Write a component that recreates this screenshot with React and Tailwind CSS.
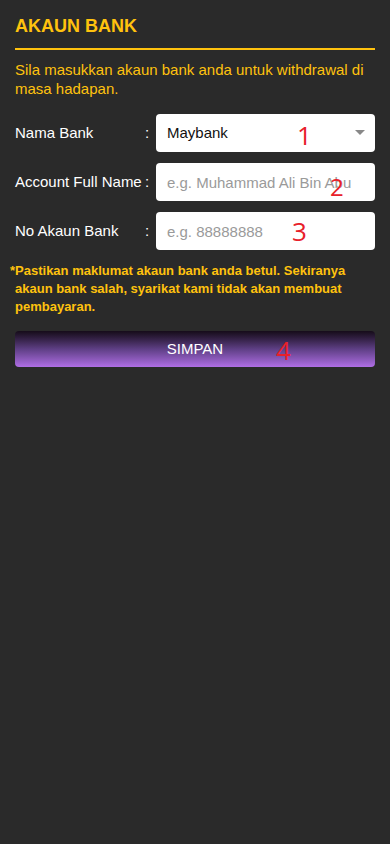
export default function App() {
  const font = { fontFamily: '"Liberation Sans", Arial, sans-serif' }
  const mark = { fontFamily: '"Open Sans", sans-serif' }

  return (
    <div className="min-h-[844px] w-full bg-[#2a2a2a] px-[15px] pt-[15px]" style={font}>
      {/* Title */}
      <h1 className="text-[18px] font-bold leading-[22px] text-[#ffc20e]">AKAUN BANK</h1>
      <div className="mt-[11px] h-[2px] bg-[#ffc20e]" />
      <p className="mt-[10px] text-[15px] leading-[19px] text-[#ffc20e]">
        Sila masukkan akaun bank anda untuk withdrawal di masa hadapan.
      </p>

      {/* Form */}
      <div className="mt-[16px] flex flex-col gap-[11px]">
        <div className="relative flex items-center">
          <label className="w-[130px] text-[15px] text-white">Nama Bank</label>
          <span className="w-[11px] text-[15px] text-white">:</span>
          <div className="relative flex h-[38px] flex-1 items-center rounded-[4px] bg-white pl-[11px] pr-[10px]">
            <span className="flex-1 text-[15px] text-[#111]">Maybank</span>
            <svg width="10" height="6" viewBox="0 0 10 6">
              <path d="M0 0h10L5 5z" fill="#888" />
            </svg>
          </div>
          <span className="absolute left-[282px] top-[3px] text-[26px] leading-[36px] text-[#e8202a]" style={mark}>1</span>
        </div>

        <div className="relative flex items-center">
          <label className="w-[130px] text-[15px] text-white">Account Full Name</label>
          <span className="w-[11px] text-[15px] text-white">:</span>
          <input
            className="h-[38px] min-w-0 flex-1 rounded-[4px] bg-white px-[11px] text-[15px] text-[#111] outline-none placeholder:text-[#9a9a9a]"
            placeholder="e.g. Muhammad Ali Bin Abu"
          />
          <span className="absolute left-[315px] top-[6px] text-[24px] leading-[36px] text-[#e8202a]" style={mark}>2</span>
        </div>

        <div className="relative flex items-center">
          <label className="w-[130px] text-[15px] text-white">No Akaun Bank</label>
          <span className="w-[11px] text-[15px] text-white">:</span>
          <input
            className="h-[38px] min-w-0 flex-1 rounded-[4px] bg-white px-[11px] text-[15px] text-[#111] outline-none placeholder:text-[#9a9a9a]"
            placeholder="e.g. 88888888"
          />
          <span className="absolute left-[277px] top-[1px] text-[26px] leading-[36px] text-[#e8202a]" style={mark}>3</span>
        </div>
      </div>

      {/* Warning */}
      <p className="mt-[12px] text-[13px] font-bold leading-[18px] text-[#ffc20e]">
        <span className="-ml-[5px]">*</span>Pastikan maklumat akaun bank anda betul. Sekiranya akaun bank salah, syarikat kami tidak akan membuat pembayaran.
      </p>

      {/* Button */}
      <div className="relative mt-[15px]">
        <button className="h-[36px] w-full rounded-[4px] bg-gradient-to-b from-[#160c1a] via-[#5e3f85] to-[#b06ee6] text-[15px] text-white">
          SIMPAN
        </button>
        <span className="absolute left-[261px] top-[1px] text-[26px] leading-[36px] text-[#e8202a]" style={mark}>4</span>
      </div>
    </div>
  )
}
